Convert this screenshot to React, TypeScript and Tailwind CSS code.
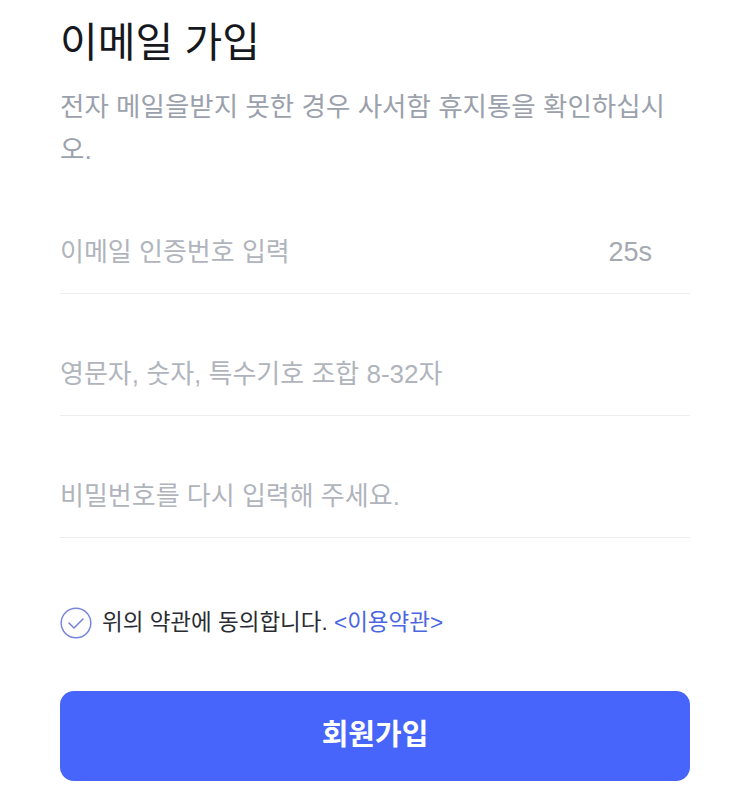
import { useState } from 'react'

const font = "font-['Liberation_Sans','Noto_Sans_CJK_KR',sans-serif]"

interface FieldProps {
  placeholder: string
  type?: string
  suffix?: string
}

function Field({ placeholder, type = 'text', suffix }: FieldProps) {
  return (
    <div className="flex h-[122px] items-end border-b border-[#ededed] pb-[23px]">
      <input
        type={type}
        placeholder={placeholder}
        className="h-9 flex-1 bg-transparent text-[26px] text-[#222] outline-none placeholder:text-[#b0b4bc]"
      />
      {suffix && <span className="pr-[38px] text-[27px] leading-9 text-[#a5a9b2]">{suffix}</span>}
    </div>
  )
}

export default function App() {
  const [agreed, setAgreed] = useState(true)

  return (
    <div className={`min-h-[796px] bg-white px-[60px] pt-[17px] ${font}`}>
      <h1 className="text-[41px] leading-[52px] font-normal text-[#16181d]">이메일 가입</h1>
      <p className="mt-[17px] text-[26.5px] leading-[43px] text-[#9ba1ac]">
        전자 메일을받지 못한 경우 사서함 휴지통을 확인하십시오.
      </p>

      <Field placeholder="이메일 인증번호 입력" suffix="25s" />
      <Field placeholder="영문자, 숫자, 특수기호 조합 8-32자" type="password" />
      <Field placeholder="비밀번호를 다시 입력해 주세요." type="password" />

      <div className="mt-[69px] flex items-center gap-[10px]">
        <button
          type="button"
          onClick={() => setAgreed(!agreed)}
          className="flex h-8 w-8 items-center justify-center"
          aria-label="약관 동의"
        >
          <svg width="32" height="32" viewBox="0 0 32 32" fill="none">
            <circle cx="16" cy="16" r="14.8" stroke="#7686da" strokeWidth="1.5" />
            {agreed && (
              <polyline
                points="9,16 14,21 23,12"
                stroke="#7686da"
                strokeWidth="1.6"
                strokeLinecap="round"
                strokeLinejoin="round"
              />
            )}
          </svg>
        </button>
        <span className="text-[22.5px] leading-8 text-[#2a2c31]">
          위의 약관에 동의합니다. <a className="text-[#4a66e3]">&lt;이용약관&gt;</a>
        </span>
      </div>

      <button
        type="button"
        className="mt-[52px] h-[90px] w-full rounded-[14px] bg-[#4865fb] text-[29px] font-bold text-white"
      >
        회원가입
      </button>
    </div>
  )
}
